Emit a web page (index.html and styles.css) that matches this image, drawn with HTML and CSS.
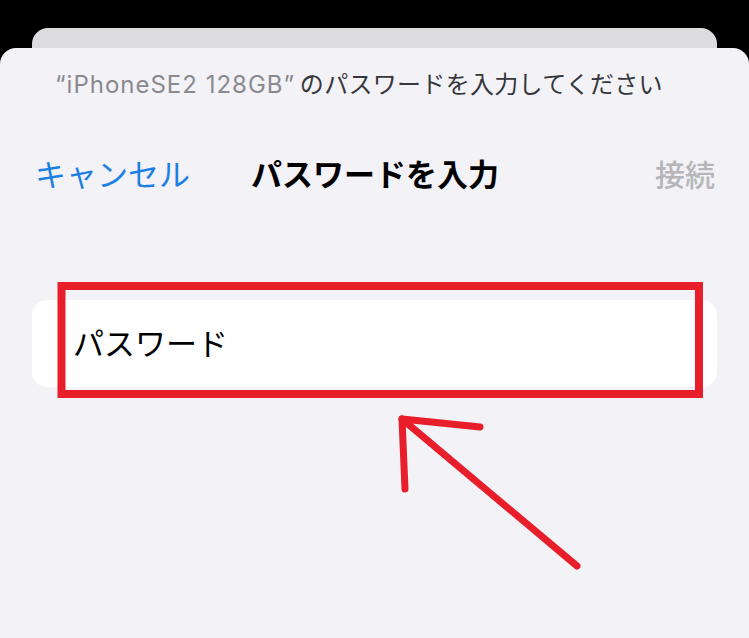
FILE: index.html
```html
<!DOCTYPE html>
<html lang="ja">
<head>
<meta charset="utf-8">
<title>パスワードを入力</title>
<link rel="stylesheet" href="styles.css">
</head>
<body>
<div class="back-card"></div>
<main class="sheet">
  <p class="prompt"><span class="prompt-name">“iPhoneSE2 128GB”</span> <span class="prompt-text">のパスワードを入力してください</span></p>
  <nav class="navbar">
    <span class="nav-cancel">キャンセル</span>
    <span class="nav-title">パスワードを入力</span>
    <span class="nav-connect">接続</span>
  </nav>
  <div class="field">
    <span class="field-placeholder">パスワード</span>
  </div>
</main>
<svg class="markup" width="749" height="638" viewBox="0 0 749 638" aria-hidden="true">
  <rect x="61.5" y="286" width="637.5" height="108" fill="none" stroke="#e81e2b" stroke-width="8"/>
  <line x1="402" y1="419" x2="577" y2="566" stroke="#e81e2b" stroke-width="7" stroke-linecap="round"/>
  <polyline points="480,427 402,419 405,489" fill="none" stroke="#e81e2b" stroke-width="7" stroke-linecap="round" stroke-linejoin="round"/>
</svg>
</body>
</html>
```

FILE: styles.css
```css
html, body {
  margin: 0;
  padding: 0;
  height: 100%;
}
body {
  background: #000;
  overflow: hidden;
  position: relative;
  font-family: Inter, "Noto Sans CJK JP", sans-serif;
}
.back-card {
  margin: 28px 32px 0;
  height: 20px;
  background: #dcdcdf;
  border-radius: 16px 16px 0 0;
}
.sheet {
  background: #f2f2f7;
  border-radius: 16px 16px 0 0;
  height: calc(100vh - 48px);
  padding-top: 19px;
  box-sizing: border-box;
}
.prompt {
  margin: 0;
  padding-left: 55px;
  font-size: 24px;
  line-height: 32px;
  white-space: nowrap;
}
.prompt-name {
  color: #8a8a8e;
  letter-spacing: 1px;
}
.prompt-text {
  color: #36363b;
  letter-spacing: 0.3px;
  margin-left: -2px;
  font-family: "Noto Sans CJK JP", sans-serif;
}
.navbar {
  margin-top: 49px;
  display: grid;
  grid-template-columns: 1fr auto 1fr;
  align-items: center;
  padding: 0 34px 0 35px;
  height: 40px;
  font-family: "Noto Sans CJK JP", sans-serif;
  font-size: 31px;
}
.nav-cancel {
  color: #1c7fe3;
  justify-self: start;
}
.nav-title {
  color: #000;
  font-weight: 700;
}
.nav-connect {
  color: #b6b6ba;
  font-weight: 500;
  justify-self: end;
  font-size: 30px;
}
.field {
  margin: 110px 32px 0;
  height: 87px;
  background: #fff;
  border-radius: 15px;
  display: flex;
  align-items: center;
  padding-left: 41px;
}
.field-placeholder {
  font-family: "Noto Sans CJK JP", sans-serif;
  font-size: 31px;
  color: #000;
  margin-top: -4px;
}
.markup {
  position: absolute;
  left: 0;
  top: 0;
  pointer-events: none;
}
```
